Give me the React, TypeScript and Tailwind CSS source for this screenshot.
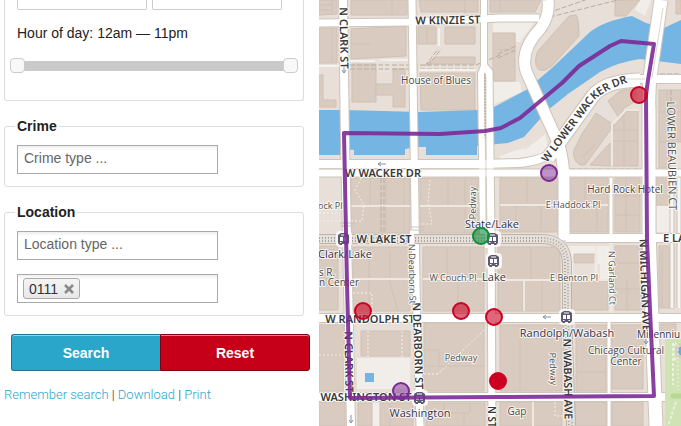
import React from "react";

const land = [
  "M319 0H337V14L319 15Z", "M351 0H407V15H351Z", "M419 0H478V12H421Z", "M490 0H541L535 12H490Z",
  "M319 28H337V63H319Z", "M351 29L406 26V56L351 59Z", "M418 27H436V44H418Z", "M445 27H475V44H445Z", "M436 57H475V64H426Z",
  "M352 64H376V84H376V102H352Z", "M376 84H393V69H405V107H393V95H376Z", "M420 73H475V110H421Z", "M319 75H323V100H336V107H319Z",
  "M493 33H515V81H493Z", "M576 15Q579 18 579 36L552 66Q543 73 538 69Q533 62 538 51L569 16Z",
  "M615 0H640L626 16H615Z",
  "M608 101L620 91Q628 88 636 89V101L624 108L619 118Z", "M582 134L596 113L614 125L585 165H580Q572 160 574 150Z", "M612 140V128L627 111H638V166H612Z", "M590 165L610 143V166Z",
  "M659 90H681V142H659Z", "M659 142H670V168H659Z", "M656 178H670V205H656Z",
  "M319 246H338V310H319Z", "M351 178H410V233H351Z", "M420 178H478V233H420Z", "M500 178H559V232H500Z",
  "M569 178H608V232H569Z", "M615 178H640V232H615Z",
  "M353 247H410V311H353Z", "M423 247H484V311H423Z", "M498 247H560V311H498Z", "M574 254H595V263H574Z", "M571 281H608V310H571Z", "M615 246H642V310H615Z", "M659 246H674V308H659Z",
  "M319 325H344V391H319Z", "M361 331H410V356H361Z", "M424 323H484V391H424Z", "M500 325H562V391H500Z", "M576 325H606V391H576Z", "M612 325H643V389H612Z",
  "M319 402H345V426H319Z", "M358 403H372V426H358Z", "M380 403H413V426H380Z", "M426 403H485V426H426Z", "M500 402H562V426H500Z", "M575 402H607V426H575Z", "M612 402H643V426H612Z",
  "M661 324H676V332H661Z", "M676 0H681V14H676Z",
];

const seams =
  "M319 5H333M319 10H333M332 0V14M392 0V14M465 0V14M500 0V12M332 29V62M427 27V44M351 44H370M498 50H515" +
  "M370 178V206M386 178V233M404 178V233M448 178V205M465 178V233" +
  "M369 248V311M390 251V283L398 311M447 247V279M470 247V279M458 283V311" +
  "M527 178V202M516 205V232M541 205V232M531 247V280M523 280V311M542 280V311" +
  "M585 178V202M597 205V232M615 196H640M626 178V232M615 215H640M615 263H642M615 289H642M627 280V311" +
  "M424 366H485M424 350H439V367M520 325V391M576 372H606M612 357H640" +
  "M444 403V413H470V403M390 403V426M464 413V426M582 157L595 145M612 130H638M612 141H638M624 115V166M659 112H681M667 90V142M662 250V308M670 250V308M319 355H344M319 270H338";

const yards = [
  "M357 358H410V389H357Z", "M500 20H536L520 42H516V33H493V22ZM493 82H520L522 92L494 104Z", "M319 285Q334 284 337 310H319Z",
  "M656 206H670V232H656Z", "M566 246H611V280H600V264H573V280H570Z", "M372 403H380V426H372Z", "M640 0H651L645 16L635 10Z",
  "M500 157Q515 149 527 149L545 134L549 152Q530 158 500 159Z",
];

const river =
  "M319 110L345 110L420 112L478 110L494 107L526 90L552 68L590 32Q604 21 632 16L646 23L664 28L681 20V64L665 62L640 59Q618 62 600 72L568 94L548 110L524 137L508 143L477 146V155H426V147H417L405 149V155H354V150L340 149V155H319Z";

const roads: { d: string; w: number }[] = [
  { d: "M319 23L411 22L500 18H539", w: 7 },
  { d: "M319 164H478L520 163Q546 160 556 149L592 98Q604 80 630 79H681", w: 8 },
  { d: "M548 158L561 140L593 96Q604 81 640 80", w: 13 },
  { d: "M319 173H681", w: 7 },
  { d: "M566 238H681", w: 8 },
  { d: "M319 318H681", w: 8 },
  { d: "M319 397H665", w: 8 },
  { d: "M343 0L345 142L348 284L351 426", w: 8 },
  { d: "M412 0L414 142L416 284L420 426", w: 7 },
  { d: "M484 0V66L481 74L483 236", w: 6 },
  { d: "M484 66L489 72L491 236L492 426", w: 7 },
  { d: "M548 0Q550 16 540 29Q520 50 526 71L556 138Q563 152 564 180V240", w: 11 },
  { d: "M661 0L651 70Q648 90 649 110V230L652 320L656 426", w: 13 },
  { d: "M611 178V238M609 318V426", w: 3 },
];

type Label = { t: string; x: number; y: number; s: number; k: "road" | "minor" | "station" | "place"; r?: number; a?: "start" };

const labels: Label[] = [
  { t: "W KINZIE ST", x: 448, y: 24, s: 11, k: "road", r: -1 },
  { t: "N CLARK ST", x: 340, y: 38, s: 11, k: "road", r: 89 },
  { t: "W WACKER DR", x: 383, y: 177, s: 11, k: "road" },
  { t: "W LAKE ST", x: 384, y: 243, s: 11, k: "road" },
  { t: "E LA", x: 663, y: 242, s: 11, k: "road", a: "start" },
  { t: "W RANDOLPH ST", x: 370, y: 323, s: 11, k: "road" },
  { t: "N CLARK ST", x: 345, y: 362, s: 11, k: "road", r: 89 },
  { t: "N DEARBORN ST", x: 414, y: 346, s: 11, k: "road", r: 88 },
  { t: "WASHINGTON ST", x: 366, y: 401, s: 11, k: "road" },
  { t: "N ST", x: 488, y: 406, s: 10, k: "road", r: 90, a: "start" },
  { t: "N WABASH AVE", x: 564, y: 379, s: 11, k: "road", r: 89 },
  { t: "N MICHIGAN AVE", x: 641, y: 285, s: 11, k: "road", r: 88 },
  { t: "LOWER BEAUBIEN CT", x: 668, y: 156, s: 11, k: "minor", r: 89 },
  { t: "House of Blues", x: 436, y: 84, s: 10, k: "place" },
  { t: "ock Pl", x: 318, y: 209, s: 9, k: "minor", a: "start" },
  { t: "E Haddock Pl", x: 573, y: 208, s: 9, k: "minor" },
  { t: "Hard Rock Hotel", x: 625, y: 193, s: 10, k: "place" },
  { t: "W Couch Pl", x: 453, y: 281, s: 9, k: "minor" },
  { t: "E Benton Pl", x: 574, y: 281, s: 9, k: "minor" },
  { t: "N Dearborn St", x: 409, y: 274, s: 9, k: "minor", r: 89 },
  { t: "N Garland Ct", x: 609, y: 278, s: 9, k: "minor", r: 89 },
  { t: "Pedway", x: 476, y: 203, s: 9, k: "minor", r: -90 },
  { t: "Pedway", x: 461, y: 361, s: 9, k: "minor" },
  { t: "Pedway", x: 550, y: 369, s: 9, k: "minor", r: 88 },
  { t: "s R.", x: 319, y: 276, s: 10, k: "place", a: "start" },
  { t: "n Center", x: 319, y: 286, s: 10, k: "place", a: "start" },
  { t: "Gap", x: 517, y: 415, s: 10, k: "place" },
  { t: "Chicago Cultural", x: 626, y: 354, s: 10, k: "place" },
  { t: "Center", x: 626, y: 365, s: 10, k: "place" },
  { t: "Clark/Lake", x: 345, y: 258, s: 11, k: "station" },
  { t: "State/Lake", x: 492, y: 228, s: 11, k: "station" },
  { t: "Lake", x: 494, y: 281, s: 11, k: "station" },
  { t: "Randolph/Wabash", x: 567, y: 337, s: 11, k: "station" },
  { t: "Washington", x: 420, y: 417, s: 11, k: "station" },
  { t: "Millenniu", x: 637, y: 338, s: 10, k: "station", a: "start" },
];

const labelStyle = {
  road: "fill-[#3a3a3a] font-['Noto_Sans',sans-serif] font-semibold",
  minor: "fill-[#505050] font-['Open_Sans',sans-serif]",
  place: "fill-[#484848] font-['Open_Sans',sans-serif]",
  station: "fill-[#33334d] font-['Open_Sans',sans-serif]",
};

const stations = [[344, 239], [493, 239], [494, 261], [567, 317], [420, 398]];

const crimes: { x: number; y: number; c: string; o: number }[] = [
  { x: 639, y: 95, c: "#cb0022", o: 0.6 },
  { x: 549, y: 173, c: "#7b2a96", o: 0.5 },
  { x: 481, y: 236, c: "#118b3c", o: 0.6 },
  { x: 363, y: 311, c: "#cb0022", o: 0.6 },
  { x: 461, y: 311, c: "#cb0022", o: 0.6 },
  { x: 494, y: 317, c: "#cb0022", o: 0.6 },
  { x: 498, y: 381, c: "#cb0022", o: 1 },
  { x: 401, y: 391, c: "#7b2a96", o: 0.5 },
];

function CrimeMap() {
  return (
    <svg
      className="h-full w-full"
      viewBox="319 0 362 426"
      preserveAspectRatio="xMinYMin slice"
      role="img"
      aria-label="Crime map"
    >
      <rect x="319" width="362" height="426" fill="#e7dfd8" />
      {yards.map((d) => <path key={d} d={d} fill="#f1ede8" />)}
      {land.map((d) => <path key={d} d={d} fill="#d9cbbf" stroke="#cfc1b4" strokeWidth="1" />)}
      <path d={seams} fill="none" stroke="#cfc2b5" strokeWidth="1" />
      <path d="M351 206H410M420 206H478M500 205H608M353 279H410M423 279H486M498 280H608M524 280V311M612 166V124L626 110H638M533 402V426M345 325V391" fill="none" stroke="#efe8e2" strokeWidth="2" />
      <path d="M611 242V314M596 246V280" fill="none" stroke="#efe9e3" strokeWidth="3" />
      <path d={river} fill="#75b5e4" />
      <rect x="365" y="373" width="9" height="9" fill="#75b5e4" />
      <path d="M665 339H681V426H665Z" fill="#cfe3b5" />
      <path d="M673 343V385M676 402L668 426M676 343Q671 352 676 361" fill="none" stroke="#e9f2dd" strokeWidth="2" strokeDasharray="3 2" />
      <path d="M673 396H681" stroke="#b9d795" strokeWidth="5" strokeLinecap="round" />
      <circle cx="683" cy="351" r="8" fill="#d8cdbb" />
      <circle cx="683" cy="351" r="5" fill="#62aee2" />

      <g fill="none" stroke="#b9ada1" strokeWidth="1" strokeDasharray="5 2">
        <path d="M350 65H476L500 55M350 69H476M425 66L438 49M428 66L441 49M381 178V236M384 178V236" />
        <path d="M498 54L516 46M498 58L516 50M550 17L630 -3M542 15L588 -1M671 90V102M660 74H681M570 169H640" />
      </g>
      <path d="M485 24V64" stroke="#b9ada1" strokeWidth="3" strokeDasharray="1 1" />
      <g fill="none" stroke="#f5f0eb" strokeWidth="1" strokeDasharray="2 2">
        <path d="M361 178L355 190L364 205L362 221H319M430 180L428 201L432 224H410M319 213H338M368 331V357M402 331V357M353 293H372V311M319 355H344M424 374H438L484 330M555 402V416H575M678 345V390M500 157L530 146L545 136" />
      </g>
      <path d="M319 66H340M350 61H375M380 60H408M439 28V46M419 70H476" fill="none" stroke="#f5f1ed" strokeWidth="2" />
      <rect x="378" y="60" width="12" height="12" rx="3" fill="none" stroke="#eee8e2" />

      <path d="M672 178V308M679 178V308" fill="none" stroke="#cdc4ba" strokeWidth="5" />
      <path d="M672 178V308M679 178V308" fill="none" stroke="#f7f4f1" strokeWidth="3" />
      {roads.map((r) => <path key={r.d} d={r.d} fill="none" stroke="#cdc4ba" strokeWidth={r.w + 2} />)}
      {roads.map((r) => <path key={r.d} d={r.d} fill="none" stroke="#ffffff" strokeWidth={r.w} />)}
      <path d="M319 239H541Q567 239 567 264V312L571 426" fill="none" stroke="#bdb5ac" strokeWidth="10" />
      <path d="M319 239H541Q567 239 567 264V312L571 426" fill="none" stroke="#e4dfd9" strokeWidth="8" />
      <path d="M319 238H541Q568 238 568 264V312L572 426M319 241H541Q565 241 565 264V312L569 426" fill="none" stroke="#aea69e" strokeWidth="2" strokeDasharray="1 2" />
      <path d="M412 230V248M487 230V248M491 230V248" stroke="#ffffff" strokeWidth="4" />
      <path d="M562 318H573M563 397H577" stroke="#ffffff" strokeWidth="8" />
      <path d="M486 76V236M319 169H520M663 8L652 78M619 79H645" fill="none" stroke="#ddd5cc" strokeWidth="1" />
      <path d="M485 74V138" fill="none" stroke="#a9a29b" strokeWidth="1" strokeDasharray="2 1" />
      <path d="M340 223H354M340 226H354M408 227H424M408 230H424" stroke="#cdc4ba" strokeWidth="1" />
      <g fill="none" stroke="#7d96a8" strokeWidth="1">
        <path d="M344 65V73L342 70M344 73L346 70M386 164H378L381 162M378 164L381 166M351 415V423L349 420M351 423L353 420M551 317H543L546 315M543 317L546 319M646 336V344L644 341M646 344L648 341" />
      </g>

      {stations.map(([x, y]) => (
        <g key={`${x}-${y}`} transform={`translate(${x - 6} ${y - 6})`}>
          <rect x="-2" y="-2" width="16" height="16" rx="4" fill="#ffffff" opacity="0.8" />
          <path d="M3 0H8L11 2V10L10 11L9 12H2L1 11L0 10V2Z" fill="#5b5a70" />
          <path d="M2 4H5V8H2ZM6 4H9V8H6ZM3 1.500H8V2.500H3Z" fill="#ffffff" />
          <path d="M2 9.500H3.500M7.500 9.500H9M4 11.500H7" stroke="#ffffff" strokeWidth="1" />
        </g>
      ))}

      <g stroke="#ffffff" strokeOpacity="0.8" strokeWidth="2" strokeLinejoin="round" style={{ paintOrder: "stroke" }}>
        {labels.map((l) => (
          <text
            key={`${l.t}-${l.x}-${l.y}`}
            className={labelStyle[l.k]}
            fontSize={l.s}
            textAnchor={l.a ?? "middle"}
            transform={`translate(${l.x} ${l.y}) rotate(${l.r ?? 0})`}
          >
            {l.t}
          </text>
        ))}
        <path id="lower-wacker" d="M547 163L590 106Q600 89 640 79" fill="none" stroke="none" />
        <text className="fill-[#3a3a3a] font-['Noto_Sans',sans-serif] font-semibold" fontSize="11">
          <textPath href="#lower-wacker">W LOWER WACKER DR</textPath>
        </text>
      </g>

      <path
        d="M344 133L440 134L485 131L501 128L520 118L562 83L579 66L610 46L621 41L654 44L648 80L646 95L647 240L650 310L654 396L500 397L350 398L347 284Z"
        fill="none" stroke="#7b2a96" strokeOpacity="0.9" strokeWidth="4" strokeLinejoin="round"
      />
      {crimes.map((c) => (
        <circle key={`${c.x}-${c.y}`} cx={c.x} cy={c.y} r="8" fill={c.c} fillOpacity={c.o} stroke={c.c} strokeWidth="2" />
      ))}
    </svg>
  );
}

const field =
  "block h-[29px] w-[201px] border border-[#aaaaaa] bg-linear-to-b from-[#eeeeee] to-white to-15% px-1.5 pb-1 text-sm text-[#222222] outline-none placeholder:text-[#666666]";
const box = "mx-1 w-[300px] rounded-[3px] border border-[#dddddd] px-3";
const legend = "-ml-0.5 px-0.5 text-sm leading-4 font-bold text-[#222222]";
const range =
  "pointer-events-none h-[15px] w-full appearance-none bg-transparent [grid-area:1/1] [&::-webkit-slider-thumb]:pointer-events-auto [&::-webkit-slider-thumb]:size-[15px] [&::-webkit-slider-thumb]:appearance-none [&::-webkit-slider-thumb]:rounded-[4px] [&::-webkit-slider-thumb]:border [&::-webkit-slider-thumb]:border-[#cccccc] [&::-webkit-slider-thumb]:bg-[#f8f8f8]";
const link = "text-[#2ba6cb] hover:underline";

export default function App() {
  return (
    <main className="flex min-h-screen bg-white font-['Liberation_Sans',Arial,sans-serif] text-sm text-[#222222]">
      <form className="w-[319px] shrink-0" onSubmit={(e) => e.preventDefault()}>
        <fieldset className="mx-1 h-[101px] w-[300px] rounded-b-[3px] border border-t-0 border-[#dddddd] px-3">
          <div className="flex gap-[5px]">
            <input aria-label="Start date" className="h-[10px] w-[130px] rounded-b-[2px] border border-t-0 border-[#cccccc]" />
            <input aria-label="End date" className="h-[10px] w-[130px] rounded-b-[2px] border border-t-0 border-[#cccccc]" />
          </div>
          <p className="mt-3 leading-[22px]">Hour of day: 12am — 11pm</p>
          <div className="-mx-[7px] mt-3.5 grid items-center">
            <div className="mx-1 h-[10px] bg-[#cacaca] [grid-area:1/1]" />
            <input type="range" aria-label="From hour" min={0} max={23} defaultValue={0} className={range} />
            <input type="range" aria-label="To hour" min={0} max={23} defaultValue={23} className={range} />
          </div>
        </fieldset>

        <fieldset className={`${box} mt-[17px] pt-[11px] pb-3`}>
          <legend className={legend}>Crime</legend>
          <input aria-label="Crime type" placeholder="Crime type ..." className={field} />
        </fieldset>

        <fieldset className={`${box} mt-[17px] pt-[11px] pb-3`}>
          <legend className={legend}>Location</legend>
          <input aria-label="Location type" placeholder="Location type ..." className={field} />
          <div className="mt-3.5 flex h-[29px] w-[201px] items-center border border-[#aaaaaa] bg-linear-to-b from-[#eeeeee] to-white to-15% px-[5px]">
            <span className="flex h-[21px] items-center gap-1.5 rounded-[3px] border border-[#aaaaaa] bg-linear-to-b from-[#f4f4f4] to-[#e8e8e8] px-[5px] text-[#333333]">
              0111
              <button type="button" aria-label="Remove 0111" className="text-[#888888]">
                <svg className="size-[10px]" viewBox="0 0 10 10" fill="none" stroke="currentColor" strokeWidth="2.5">
                  <path d="M1 1L9 9M9 1L1 9" />
                </svg>
              </button>
            </span>
          </div>
        </fieldset>

        <div className="mt-[18px] ml-[11px] flex w-[299px] font-bold text-white">
          <button type="submit" className="h-[37px] flex-1 rounded-l-[3px] border border-r-0 border-[#1e728c] bg-[#2ba6cb] shadow-[inset_0_1px_0_rgba(255,255,255,0.5)]">
            Search
          </button>
          <button type="reset" className="h-[37px] flex-1 rounded-r-[3px] border border-[#820011] bg-[#c60018] shadow-[inset_0_1px_0_rgba(255,255,255,0.5)]">
            Reset
          </button>
        </div>

        <p className="mt-3.5 ml-1 font-['Roboto',sans-serif] text-[13px] leading-5 font-light">
          <a href="#remember" className={link}>Remember search</a> |{" "}
          <a href="#download" className={link}>Download</a> |{" "}
          <a href="#print" className={link}>Print</a>
        </p>
      </form>
      <section className="h-screen min-w-0 flex-1 overflow-hidden">
        <CrimeMap />
      </section>
    </main>
  );
}
